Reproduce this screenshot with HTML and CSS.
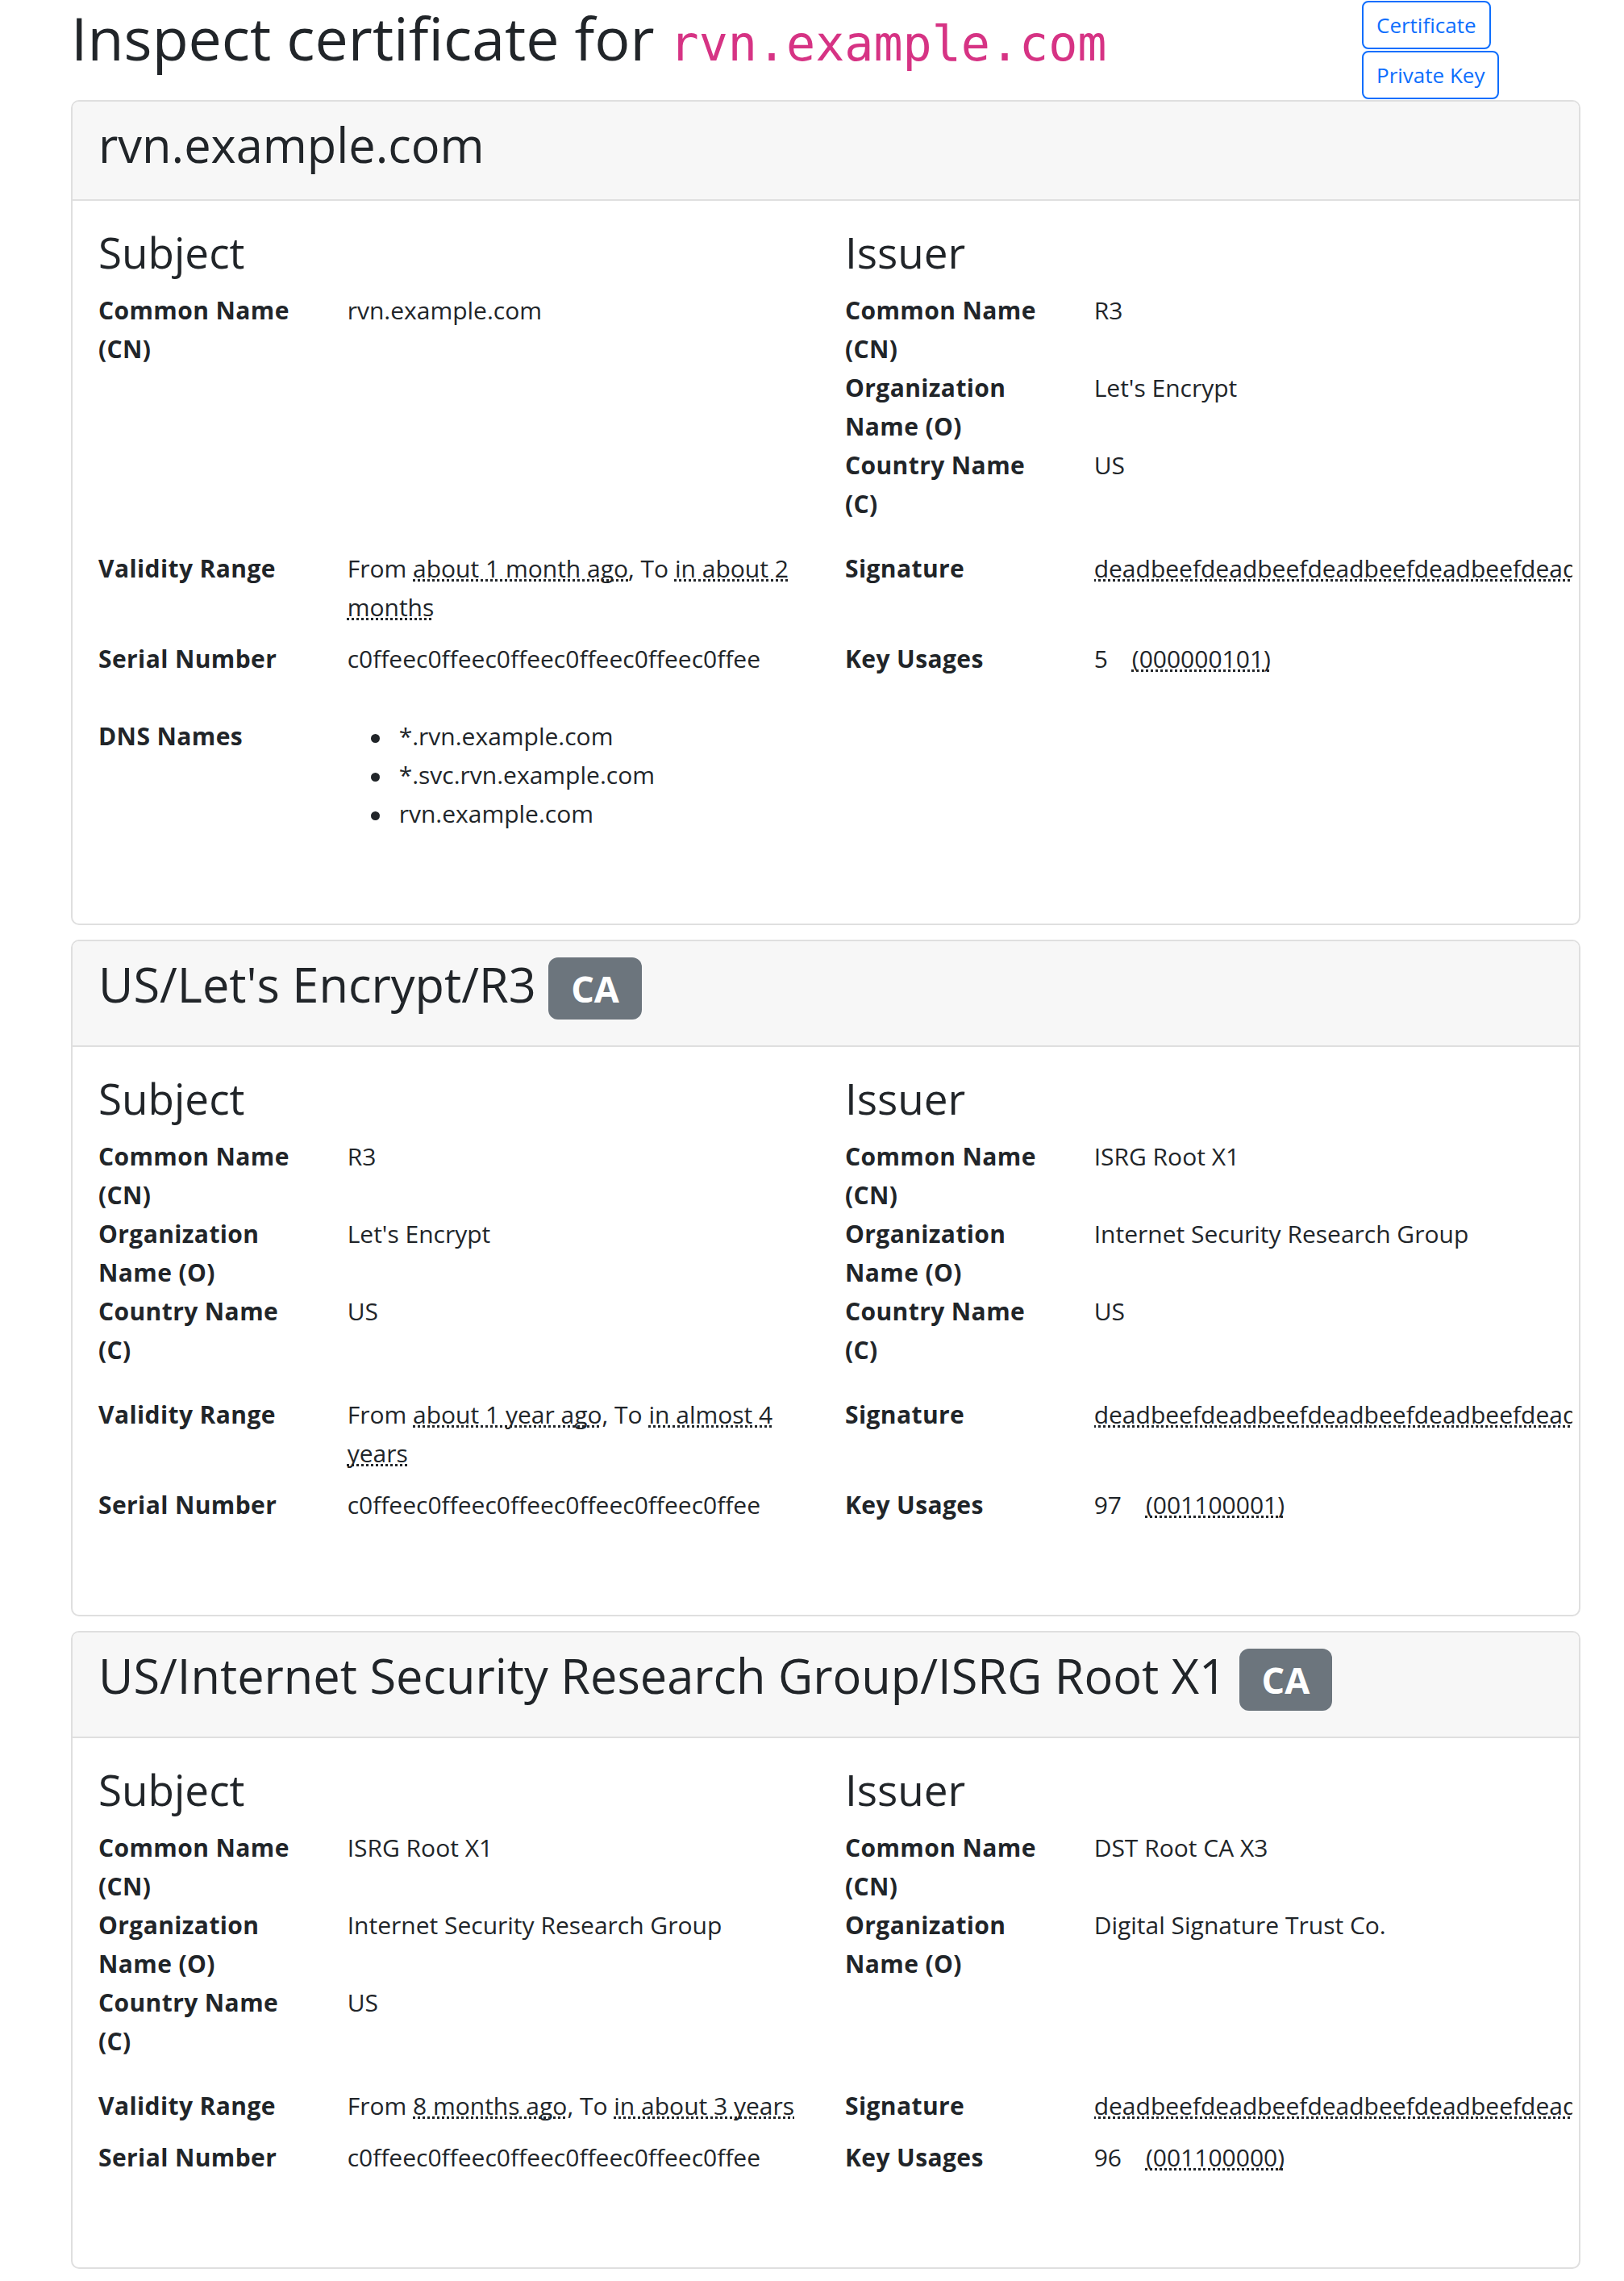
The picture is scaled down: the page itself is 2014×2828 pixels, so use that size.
FILE: index.html
```html
<!DOCTYPE html>
<html lang="en">
<head>
<meta charset="utf-8">
<title>Inspect certificate for rvn.example.com</title>
<link rel="stylesheet" href="styles.css">
</head>
<body>
<div class="page">
  <div class="topbar">
    <h1 class="title">Inspect certificate for <code>rvn.example.com</code></h1>
    <div class="actions">
      <a class="btn" href="#">Certificate</a>
      <a class="btn" href="#">Private Key</a>
    </div>
  </div>

  <section class="card">
    <div class="card-header"><h2 class="card-title">rvn.example.com</h2></div>
    <div class="card-body">
      <div class="names">
        <div class="col">
          <h3 class="section-title">Subject</h3>
          <dl class="fields">
            <dt>Common Name (CN)</dt><dd>rvn.example.com</dd>
          </dl>
        </div>
        <div class="col">
          <h3 class="section-title">Issuer</h3>
          <dl class="fields">
            <dt>Common Name (CN)</dt><dd>R3</dd>
            <dt>Organization Name (O)</dt><dd>Let's Encrypt</dd>
            <dt>Country Name (C)</dt><dd>US</dd>
          </dl>
        </div>
      </div>
      <dl class="fields wide">
        <dt>Validity Range</dt><dd>From <abbr title="2021-09-01">about 1 month ago</abbr>, To <abbr title="2022-01-01">in about 2 months</abbr></dd>
        <dt>Signature</dt><dd class="sig"><abbr title="signature">deadbeefdeadbeefdeadbeefdeadbeefdeadbeefdeadbeefdeadbeefdeadbeef</abbr></dd>
        <dt>Serial Number</dt><dd>c0ffeec0ffeec0ffeec0ffeec0ffeec0ffee</dd>
        <dt>Key Usages</dt><dd>5<abbr class="bits" title="key usage bits">(000000101)</abbr></dd>
      </dl>
      <dl class="fields">
        <dt>DNS Names</dt>
        <dd>
          <ul class="hosts">
            <li>*.rvn.example.com</li>
            <li>*.svc.rvn.example.com</li>
            <li>rvn.example.com</li>
          </ul>
        </dd>
      </dl>
    </div>
  </section>

  <section class="card">
    <div class="card-header"><h2 class="card-title">US/Let's Encrypt/R3 <span class="badge">CA</span></h2></div>
    <div class="card-body">
      <div class="names">
        <div class="col">
          <h3 class="section-title">Subject</h3>
          <dl class="fields">
            <dt>Common Name (CN)</dt><dd>R3</dd>
            <dt>Organization Name (O)</dt><dd>Let's Encrypt</dd>
            <dt>Country Name (C)</dt><dd>US</dd>
          </dl>
        </div>
        <div class="col">
          <h3 class="section-title">Issuer</h3>
          <dl class="fields">
            <dt>Common Name (CN)</dt><dd>ISRG Root X1</dd>
            <dt>Organization Name (O)</dt><dd>Internet Security Research Group</dd>
            <dt>Country Name (C)</dt><dd>US</dd>
          </dl>
        </div>
      </div>
      <dl class="fields wide">
        <dt>Validity Range</dt><dd>From <abbr title="2020-09-04">about 1 year ago</abbr>, To <abbr title="2025-09-15">in almost 4 years</abbr></dd>
        <dt>Signature</dt><dd class="sig"><abbr title="signature">deadbeefdeadbeefdeadbeefdeadbeefdeadbeefdeadbeefdeadbeefdeadbeef</abbr></dd>
        <dt>Serial Number</dt><dd>c0ffeec0ffeec0ffeec0ffeec0ffeec0ffee</dd>
        <dt>Key Usages</dt><dd>97<abbr class="bits" title="key usage bits">(001100001)</abbr></dd>
      </dl>
      <dl class="fields"></dl>
    </div>
  </section>

  <section class="card">
    <div class="card-header"><h2 class="card-title">US/Internet Security Research Group/ISRG Root X1 <span class="badge">CA</span></h2></div>
    <div class="card-body">
      <div class="names">
        <div class="col">
          <h3 class="section-title">Subject</h3>
          <dl class="fields">
            <dt>Common Name (CN)</dt><dd>ISRG Root X1</dd>
            <dt>Organization Name (O)</dt><dd>Internet Security Research Group</dd>
            <dt>Country Name (C)</dt><dd>US</dd>
          </dl>
        </div>
        <div class="col">
          <h3 class="section-title">Issuer</h3>
          <dl class="fields">
            <dt>Common Name (CN)</dt><dd>DST Root CA X3</dd>
            <dt>Organization Name (O)</dt><dd>Digital Signature Trust Co.</dd>
          </dl>
        </div>
      </div>
      <dl class="fields wide">
        <dt>Validity Range</dt><dd>From <abbr title="2021-01-20">8 months ago</abbr>, To <abbr title="2024-09-30">in about 3 years</abbr></dd>
        <dt>Signature</dt><dd class="sig"><abbr title="signature">deadbeefdeadbeefdeadbeefdeadbeefdeadbeefdeadbeefdeadbeefdeadbeef</abbr></dd>
        <dt>Serial Number</dt><dd>c0ffeec0ffeec0ffeec0ffeec0ffeec0ffee</dd>
        <dt>Key Usages</dt><dd>96<abbr class="bits" title="key usage bits">(001100000)</abbr></dd>
      </dl>
      <dl class="fields"></dl>
    </div>
  </section>
</div>
</body>
</html>
```

FILE: styles.css
```css
* { box-sizing: border-box; }

html, body {
  margin: 0;
  padding: 0;
  background: #ffffff;
}

body {
  font-family: "Open Sans", "Noto Sans", "DejaVu Sans", sans-serif;
  font-size: 30px;
  line-height: 48px;
  color: #212529;
}

.page {
  width: 1872px;
  margin-left: 88px;
}

.topbar {
  display: grid;
  grid-template-columns: 1601px auto;
  align-items: start;
}

.title {
  margin: 0;
  padding-top: 2px;
  font-size: 73.5px;
  line-height: 90px;
  font-weight: 400;
}

.title code {
  font-family: "DejaVu Sans Mono", "Liberation Mono", monospace;
  font-size: 60px;
  line-height: 1;
  color: #d63384;
}

.actions {
  display: flex;
  flex-direction: column;
  align-items: flex-start;
  gap: 2px;
  padding: 1px 0 1px;
}

.btn {
  display: block;
  padding: 7px 16px;
  border: 2px solid #0d6efd;
  border-radius: 8px;
  color: #0d6efd;
  font-size: 26px;
  line-height: 42px;
  text-decoration: none;
}

.card {
  border: 2px solid #dfdfdf;
  border-radius: 10px;
  margin-bottom: 18px;
  overflow: hidden;
  background: #ffffff;
}

.card-header {
  background: #f7f7f7;
  border-bottom: 2px solid #dfdfdf;
  padding: 16px 32px;
}

.card-title {
  margin: 0 0 16px;
  font-size: 59.5px;
  line-height: 73px;
  font-weight: 400;
}

.badge {
  display: inline-block;
  background: #6c757d;
  color: #ffffff;
  font-size: 45px;
  font-weight: 700;
  line-height: 1;
  padding: 16px 28px;
  border-radius: 12px;
  vertical-align: baseline;
}

.card-body {
  padding: 32px;
  display: flex;
  flex-direction: column;
}

.names {
  display: grid;
  grid-template-columns: 1fr 1fr;
  column-gap: 48px;
}

.section-title {
  margin: 0 0 16px;
  font-size: 53px;
  line-height: 64px;
  font-weight: 400;
}

.fields {
  margin: 0 0 32px;
  display: grid;
  grid-template-columns: 260.67px minmax(0, 1fr);
  column-gap: 48px;
}

.fields.wide {
  grid-template-columns: 260.67px minmax(0, 1fr) 260.67px minmax(0, 1fr);
}

.fields dt {
  font-weight: 700;
  letter-spacing: 0.4px;
  padding-right: 16px;
}

.fields dd {
  margin: 0 0 16px;
  min-width: 0;
}

.fields dd.sig {
  overflow: hidden;
  white-space: nowrap;
  margin-right: -24px;
}

abbr {
  text-decoration: underline dotted;
  text-decoration-skip-ink: none;
  cursor: help;
}

.bits {
  margin-left: 30px;
}

.hosts {
  margin: 0 0 32px;
  padding-left: 64px;
  list-style: none;
}

.hosts li {
  position: relative;
}

.hosts li::before {
  content: "";
  position: absolute;
  left: -35px;
  top: 21px;
  width: 11px;
  height: 11px;
  border-radius: 50%;
  background: #212529;
}
```
